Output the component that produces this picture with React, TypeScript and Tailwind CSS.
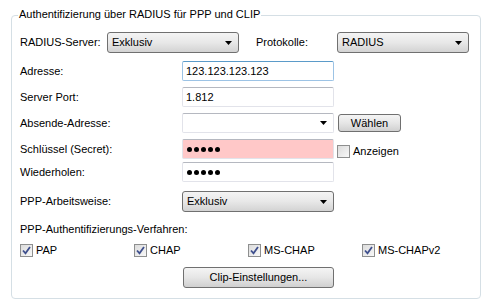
import type { ReactNode } from 'react';

const font = { fontFamily: '"Liberation Sans", Arial, sans-serif' };

function Arrow() {
    return (
        <svg width="7" height="4" viewBox="0 0 7 4" className="shrink-0">
            <path d="M0 0h7L3.5 4z" fill="#000" />
        </svg>
    );
}

function ComboButton({ value, width }: { value: string; width: string }) {
    return (
        <div
            className={`${width} h-[21px] flex items-center justify-between pl-[4px] pr-[6px] border border-[#707070] rounded-[3px] bg-linear-to-b from-[#f4f4f4] via-[#e8e8e8] to-[#d3d3d3] shrink-0`}
        >
            <span>{value}</span>
            <Arrow />
        </div>
    );
}

function TextBox({ children, focused, pink }: { children?: ReactNode; focused?: boolean; pink?: boolean }) {
    return (
        <div
            className={`w-[152px] h-[20px] flex items-center pl-[3px] border rounded-[2px] shrink-0 ${
                focused
                    ? 'border-[#9cc3e5] border-t-[#5b9bc9]'
                    : 'border-[#e2e3ea] border-t-[#b5b8c0]'
            } ${pink ? 'bg-[#ffc8c8]' : 'bg-white'}`}
        >
            {children}
        </div>
    );
}

function Dots() {
    return (
        <div className="flex gap-[2px] pl-[1px]">
            {[0, 1, 2, 3, 4].map((i) => (
                <div key={i} className="w-[5px] h-[5px] rounded-full bg-black" />
            ))}
        </div>
    );
}

function CheckBox({ checked }: { checked?: boolean }) {
    return (
        <div className="w-[13px] h-[13px] border border-[#8e8f8f] bg-linear-to-br from-[#dcdcdc] to-[#f8f8f8] flex items-center justify-center shrink-0">
            {checked && (
                <svg width="9" height="9" viewBox="0 0 9 9">
                    <path d="M1 4.5l2.5 2.8L8 1" stroke="#3e4f8d" strokeWidth="1.8" fill="none" />
                </svg>
            )}
        </div>
    );
}

function Button({ label, className }: { label: string; className: string }) {
    return (
        <div
            className={`${className} flex items-center justify-center border border-[#707070] rounded-[3px] bg-linear-to-b from-[#f4f4f4] via-[#e6e6e6] to-[#d0d0d0] shrink-0`}
        >
            {label}
        </div>
    );
}

function Row({ label, children, className }: { label: string; children: ReactNode; className: string }) {
    return (
        <div className={`flex items-center ${className}`}>
            <span className="w-[162px] shrink-0">{label}</span>
            {children}
        </div>
    );
}

export default function App() {
    return (
        <div className="w-[489px] h-[305px] bg-white pt-[15px] pl-[11px] text-[11px] text-black leading-none" style={font}>
            <div className="relative w-[470px] h-[284px] border border-[#d5dfe5] rounded-[4px] pt-[16px] pl-[8px]">
                <span className="absolute -top-[7px] left-[6px] px-[1px] bg-white">
                    Authentifizierung über RADIUS für PPP und CLIP
                </span>

                <div className="flex items-center h-[21px]">
                    <span className="w-[87px] shrink-0">RADIUS-Server:</span>
                    <ComboButton value="Exklusiv" width="w-[132px]" />
                    <span className="w-[98px] pl-[17px] shrink-0">Protokolle:</span>
                    <ComboButton value="RADIUS" width="w-[132px]" />
                </div>

                <Row label="Adresse:" className="mt-[8px] h-[20px]">
                    <TextBox focused>123.123.123.123</TextBox>
                </Row>
                <Row label="Server Port:" className="mt-[6px] h-[20px]">
                    <TextBox>1.812</TextBox>
                </Row>
                <Row label="Absende-Adresse:" className="mt-[6px] h-[20px]">
                    <div className="w-[152px] h-[20px] flex items-center justify-end pr-[6px] border border-[#e2e3ea] border-t-[#b5b8c0] rounded-[2px] bg-white shrink-0">
                        <Arrow />
                    </div>
                    <Button label="Wählen" className="ml-[4px] w-[63px] h-[18px]" />
                </Row>
                <Row label="Schlüssel (Secret):" className="mt-[6px] h-[20px]">
                    <TextBox pink>
                        <Dots />
                    </TextBox>
                    <div className="ml-[3px] mt-[5px] flex items-center gap-[3px]">
                        <CheckBox />
                        <span>Anzeigen</span>
                    </div>
                </Row>
                <Row label="Wiederholen:" className="mt-[3px] h-[20px]">
                    <TextBox>
                        <Dots />
                    </TextBox>
                </Row>
                <Row label="PPP-Arbeitsweise:" className="mt-[9px] h-[21px]">
                    <ComboButton value="Exklusiv" width="w-[152px]" />
                </Row>

                <div className="mt-[10px] h-[14px] flex items-center">PPP-Authentifizierungs-Verfahren:</div>

                <div className="mt-[8px] flex h-[13px]">
                    {['PAP', 'CHAP', 'MS-CHAP', 'MS-CHAPv2'].map((name) => (
                        <div key={name} className="w-[114px] flex items-center gap-[3px]">
                            <CheckBox checked />
                            <span>{name}</span>
                        </div>
                    ))}
                </div>

                <div className="mt-[10px] flex">
                    <Button label="Clip-Einstellungen..." className="ml-[163px] w-[151px] h-[21px]" />
                </div>
            </div>
        </div>
    );
}
